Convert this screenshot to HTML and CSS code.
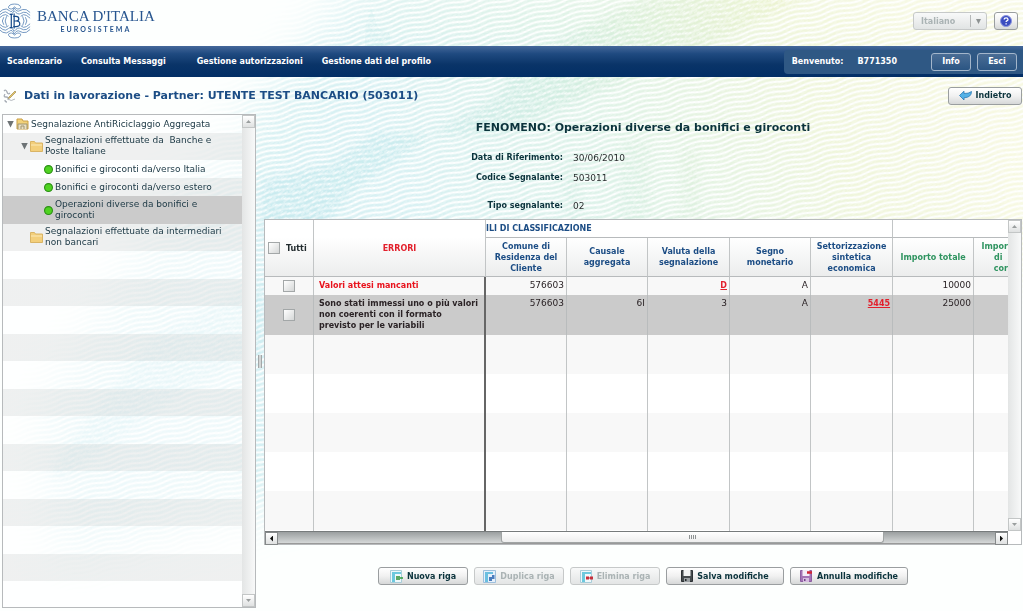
FILE: index.html
```html
<!DOCTYPE html>
<html lang="it">
<head>
<meta charset="utf-8">
<title>Banca d'Italia - Dati in lavorazione</title>
<link rel="stylesheet" href="styles.css">
</head>
<body>
<svg class="backdrop" viewBox="0 0 1023 611" preserveAspectRatio="xMidYMin slice" aria-hidden="true">
  <defs>
    <pattern id="waves" width="42" height="5" patternUnits="userSpaceOnUse" patternTransform="rotate(-14)">
      <path d="M0 2.5 Q10.500 0 21 2.5 T42 2.5" fill="none" stroke="#fff" stroke-width="2"/>
    </pattern>
    <pattern id="grain" width="11" height="9" patternUnits="userSpaceOnUse" patternTransform="rotate(-38)">
      <path d="M0 1h8M0 5.500h4M6 4h4M2 7.500h3" stroke="#fff" stroke-width="1.6" fill="none"/>
    </pattern>
    <linearGradient id="tint" gradientUnits="userSpaceOnUse" x1="60" y1="420" x2="960" y2="60">
      <stop offset="0" stop-color="#a9dfe9"/>
      <stop offset="0.42" stop-color="#b4e3e8"/>
      <stop offset="0.62" stop-color="#bfe6d2"/>
      <stop offset="0.85" stop-color="#e3edb9"/>
      <stop offset="1" stop-color="#f1f2c6"/>
    </linearGradient>
    <filter id="soft" x="-20%" y="-20%" width="140%" height="140%"><feGaussianBlur stdDeviation="24"/></filter>
    <filter id="edge" x="-20%" y="-20%" width="140%" height="140%"><feGaussianBlur stdDeviation="4"/></filter>
    <mask id="field" maskUnits="userSpaceOnUse" x="0" y="0" width="1023" height="611">
      <path filter="url(#soft)" d="M40 420 L150 230 L360 -20 L1060 -30 L1060 270 L640 330 L300 500 L60 560Z" fill="#fff" fill-opacity="0.5"/>
    </mask>
  </defs>
  <g mask="url(#field)">
    <rect width="1023" height="611" fill="url(#tint)"/>
    <rect width="1023" height="611" fill="url(#waves)"/>
  </g>
  <g opacity="0.34">
    <g filter="url(#edge)" fill="url(#tint)">
      <path d="M262 240 L262 180 L330 165 L375 133 L430 134 L408 152 L352 190 L330 219 L300 240Z"/>
      <path d="M520 60 L640 0 L740 -10 L820 -10 L700 50 L600 90 L500 135 L430 134 L500 95Z"/>
      <path d="M50 470 L150 340 L262 280 L262 350 L170 400 L60 480Z" opacity="0.8"/>
      <path d="M565 219 V160 H580 V219Z M620 219 V140 H650 V219Z M680 219 V150 H700 V219Z" opacity="0.5"/>
    </g>
    <path d="M365 46 V28 L371 8 L378 28 L390 34 V46Z" fill="url(#tint)" opacity="0.5"/>
    <rect width="1023" height="611" fill="url(#grain)" opacity="0.8"/>
  </g>
</svg>

<div class="app">
  <header class="masthead">
    <a class="brand" href="#">
      <svg class="emblem" viewBox="0 0 34 40" aria-hidden="true">
        <g fill="none" stroke="#5d87b8" stroke-width="0.9">
          <path d="M-1 14 L3 11 Q6 9 9 12 T15 9 Q19 14 22 12 T28 11 L32 14"/>
          <path d="M-1 17 L3 14 Q6 12 9 15 M22 15 Q25 12 28 14 L32 17"/>
          <path d="M-1 11 L3 8 Q7 6 10 9 T15 6 Q18 11 21 9 T28 8 L32 11"/>
          <path d="M-1 26 L3 29 Q6 31 9 28 T15 31 Q19 26 22 28 T28 29 L32 26"/>
          <path d="M-1 23 L3 26 Q6 28 9 25 M22 25 Q25 28 28 26 L32 23"/>
          <path d="M-1 29 L3 32 Q7 34 10 31 T15 34 Q18 29 21 31 T28 32 L32 29"/>
          <path d="M9 6 Q9 2 15.500 2 T22 6 Q19 9 15.500 5 Q12 9 9 6M9 34 Q9 38 15.500 38 T22 34 Q19 31 15.500 35 Q12 31 9 34"/>
          <path d="M7 15 Q4 20 7 25 M24 15 Q27 20 24 25 M4 16 Q1 20 4 24 M27 16 Q30 20 27 24"/>
        </g>
        <g fill="none" stroke="#164a8a" stroke-width="1.3">
          <path d="M12 13v14M10.500 13h3M10.500 27h3M15 12v16M14 15h3q3 0 3 2.500t-3 2.500h-2M17 20q4 0 4 3t-4 3h-3"/>
        </g>
      </svg>
      <span class="brand-text">
        <span class="brand-name">BANCA D'ITALIA</span>
        <span class="brand-sub">EUROSISTEMA</span>
      </span>
    </a>
    <div class="tools">
      <label class="language">
        <select aria-label="Lingua" disabled><option>Italiano</option></select>
        <svg class="caret" viewBox="0 0 14 12" aria-hidden="true"><path d="M0.5 0v12" stroke="#b5b8b8"/><path d="M6 4h5l-2.500 5z" fill="#8d9292"/></svg>
      </label>
      <button class="btn help" type="button" aria-label="Aiuto">
        <svg width="12" height="12" viewBox="0 0 12 12"><circle cx="6" cy="6" r="5.500" fill="#3a4cc0" stroke="#8a94dd"/><path d="M4.200 4.600q0-1.800 1.900-1.800t1.900 1.600q0 1-1.200 1.500q-.7.300-.7 1.200M6.100 8.300v1.200" fill="none" stroke="#fff" stroke-width="1.300"/></svg>
      </button>
    </div>
  </header>

  <nav class="navbar">
    <div class="menu">
      <a href="#">Scadenzario</a>
      <a href="#" class="wide">Consulta Messaggi</a>
      <a href="#">Gestione autorizzazioni</a>
      <a href="#">Gestione dati del profilo</a>
    </div>
    <div class="user">
      <span>Benvenuto:</span>
      <span class="user-id">B771350</span>
      <button class="nav-btn" type="button">Info</button>
      <button class="nav-btn" type="button">Esci</button>
    </div>
  </nav>

  <div class="title-bar">
    <svg width="16" height="16" viewBox="0 0 16 16" aria-hidden="true"><path d="M2 3q2-2 3 1t3 1M3 6q-2 3 1 3t2 3M5 14q-2 0-2-2" fill="none" stroke="#a7adb5" stroke-width="1.300"/><path d="M7 9L13 3l1 1-6 6-2 .6z" fill="#e5c765" stroke="#93804a" stroke-width=".6"/><path d="M6 11q3 3 7 0" fill="none" stroke="#b3b8bd"/></svg>
    <h1>Dati in lavorazione - Partner: UTENTE TEST BANCARIO (503011)</h1>
    <button class="btn back" type="button">
      <svg width="13" height="11" viewBox="0 0 13 11" aria-hidden="true"><path d="M.5 5.500L5 1.200v2.300q4.500.3 7.500-2Q12.500 7.500 5 7.800V10z" fill="#55b1e6" stroke="#2a78b5" stroke-width=".8"/></svg>
      Indietro
    </button>
  </div>

  <div class="workspace">
    <aside class="tree-panel">
      <ul class="tree">
        <li class="lvl0"><span class="twisty"></span>
          <svg class="folder" viewBox="0 0 13 12" aria-hidden="true"><path d="M1 3V1h5l1 2h5v8H1z" fill="#f2d27a" stroke="#c99f45"/><path d="M2 11V6h9v5M5 11V8h3v3" fill="#e8dfc6" stroke="#a0956f"/></svg>
          <a href="#">Segnalazione AntiRiciclaggio Aggregata</a></li>
        <li class="lvl1 alt"><span class="twisty"></span>
          <svg class="folder" viewBox="0 0 13 12" aria-hidden="true"><path d="M.5 3V1.500h4l1 1.500h7v8.500H.5z" fill="#f3cf7b" stroke="#d9b465"/><path d="M1 5h11" stroke="#fbe9b8"/></svg>
          <a href="#">Segnalazioni effettuate da&nbsp; Banche e<br>Poste Italiane</a></li>
        <li class="lvl2"><svg class="dot" viewBox="0 0 8 8" aria-hidden="true"><circle cx="4" cy="4" r="3.500" fill="#4fd321" stroke="#2c8f17"/></svg><a href="#">Bonifici e giroconti da/verso Italia</a></li>
        <li class="lvl2 alt"><svg class="dot" viewBox="0 0 8 8" aria-hidden="true"><circle cx="4" cy="4" r="3.500" fill="#4fd321" stroke="#2c8f17"/></svg><a href="#">Bonifici e giroconti da/verso estero</a></li>
        <li class="lvl2 selected"><svg class="dot" viewBox="0 0 8 8" aria-hidden="true"><circle cx="4" cy="4" r="3.500" fill="#4fd321" stroke="#2c8f17"/></svg><a href="#">Operazioni diverse da bonifici e<br>giroconti</a></li>
        <li class="lvl1 alt leaf">
          <svg class="folder" viewBox="0 0 13 12" aria-hidden="true"><path d="M.5 3V1.500h4l1 1.500h7v8.500H.5z" fill="#f3cf7b" stroke="#d9b465"/><path d="M1 5h11" stroke="#fbe9b8"/></svg>
          <a href="#">Segnalazioni effettuate da intermediari<br>non bancari</a></li>
        <li class="filler"></li>
      </ul>
      <div class="vbar"><span class="step up"></span><span class="step down"></span></div>
    </aside>

    <div class="splitter"><span></span></div>

    <main class="content">
      <h2>FENOMENO: Operazioni diverse da bonifici e giroconti</h2>
      <dl class="facts">
        <dt>Data di Riferimento:</dt><dd>30/06/2010</dd>
        <dt>Codice Segnalante:</dt><dd>503011</dd>
        <dt class="late">Tipo segnalante:</dt><dd class="late">02</dd>
      </dl>

      <div class="grid">
        <div class="viewport">
          <table>
            <colgroup><col class="c-check"><col class="c-error"><col class="c-val"><col class="c-val"><col class="c-wide"><col class="c-val"><col class="c-wide"><col class="c-val"><col></colgroup>
            <thead>
              <tr class="group">
                <th rowspan="2" class="tall"><label class="all"><input type="checkbox">Tutti</label></th>
                <th rowspan="2" class="tall errors">ERRORI</th>
                <th colspan="5" class="group-name">ILI DI CLASSIFICAZIONE</th>
                <th colspan="2"></th>
              </tr>
              <tr class="names">
                <th>Comune di<br>Residenza del<br>Cliente</th>
                <th>Causale<br>aggregata</th>
                <th>Valuta della<br>segnalazione</th>
                <th>Segno<br>monetario</th>
                <th>Settorizzazione<br>sintetica<br>economica</th>
                <th class="green">Importo totale</th>
                <th class="green partial">Impor<br>di&nbsp;&nbsp;<br>cor</th>
              </tr>
            </thead>
            <tbody>
              <tr class="alt"><td class="check"><input type="checkbox" aria-label="Seleziona riga 1"></td><td class="msg bad">Valori attesi mancanti</td><td>576603</td><td></td><td><a href="#">D</a></td><td>A</td><td></td><td>10000</td><td></td></tr>
              <tr class="current"><td class="check"><input type="checkbox" aria-label="Seleziona riga 2"></td><td class="msg">Sono stati immessi uno o più valori<br>non coerenti con il formato<br>previsto per le variabili</td><td>576603</td><td>6I</td><td>3</td><td>A</td><td><a href="#">5445</a></td><td>25000</td><td></td></tr>
              <tr class="empty alt"><td></td><td></td><td></td><td></td><td></td><td></td><td></td><td></td><td></td></tr>
              <tr class="empty"><td></td><td></td><td></td><td></td><td></td><td></td><td></td><td></td><td></td></tr>
              <tr class="empty alt"><td></td><td></td><td></td><td></td><td></td><td></td><td></td><td></td><td></td></tr>
              <tr class="empty"><td></td><td></td><td></td><td></td><td></td><td></td><td></td><td></td><td></td></tr>
              <tr class="empty alt"><td></td><td></td><td></td><td></td><td></td><td></td><td></td><td></td><td></td></tr>
              <tr class="empty"><td></td><td></td><td></td><td></td><td></td><td></td><td></td><td></td><td></td></tr>
            </tbody>
          </table>
        </div>
        <div class="vbar"><span class="step up"></span><span class="step down"></span></div>
        <div class="hbar">
          <span class="step left"></span>
          <span class="track"><span class="thumb"><i></i><i></i><i></i><i></i></span></span>
          <span class="step right"></span>
        </div>
        <div class="corner"></div>
      </div>

      <div class="actions">
        <button class="btn row-btn" type="button">
          <svg width="13" height="13" viewBox="0 0 13 13" aria-hidden="true"><path d="M.5.500h11v12H.5z" fill="#eef8fb" stroke="#a8cdd9"/><path d="M2 2h9v2H5v8H2z" fill="#6cc9de"/><path d="M6 6h4v4H6z" fill="#5aa765"/><path d="M10 8h3" stroke="#2d9a3a" stroke-width="1.500"/></svg>
          Nuova riga</button>
        <button class="btn row-btn" type="button" disabled>
          <svg width="13" height="13" viewBox="0 0 13 13" aria-hidden="true"><path d="M.5.500h12v12H.5z" fill="#e6f0fa" stroke="#9dbfdc"/><path d="M2 2h8v2H5v8H2z" fill="#6bbfe0"/><path d="M6 7h3v4H6zM9 5h2.500v4H9z" fill="#4a7cbd"/></svg>
          Duplica riga</button>
        <button class="btn row-btn" type="button" disabled>
          <svg width="13" height="13" viewBox="0 0 13 13" aria-hidden="true"><path d="M.5.500h11v12H.5z" fill="#eef8fb" stroke="#a8cdd9"/><path d="M2 2h9v2H5v8H2z" fill="#6cc9de"/><path d="M6 6.500h3v3H6zM10 6.500h3v3h-3z" fill="#c4303c"/><path d="M9 8h1" stroke="#c4303c"/></svg>
          Elimina riga</button>
        <button class="btn save-btn" type="button">
          <svg width="12" height="12" viewBox="0 0 12 12" aria-hidden="true"><path d="M.5.500h11v11H.5z" fill="#444a4d" stroke="#2c3134"/><path d="M2.500 0h7v6h-7z" fill="#f1f3f3"/><path d="M3 8h6v4H3z" fill="#9ba1a4"/><path d="M4 9h1.500v2H4z" fill="#25292b"/></svg>
          Salva modifiche</button>
        <button class="btn save-btn" type="button">
          <svg width="13" height="12" viewBox="0 0 13 12" aria-hidden="true"><path d="M.5.500h11v11H.5z" fill="#a473b6" stroke="#8d5ea2"/><path d="M2.500 0h7v6h-7z" fill="#f4ecf7"/><path d="M3 8h6v4H3z" fill="#d6bce0"/><path d="M4 9h1.500v2H4z" fill="#6d3f82"/><path d="M7 2.500h5" stroke="#cf2436" stroke-width="2.500"/></svg>
          Annulla modifiche</button>
      </div>
    </main>
  </div>
</div>
</body>
</html>
```

FILE: styles.css
```css
:root {
  --ink: #0b333c;
  --blue: #1c4d85;
  --line: #b7babc;
  --sans: "DejaVu Sans", Verdana, sans-serif;
}
* { box-sizing: border-box; }
html, body { height: 100%; margin: 0; }
body { background: #fdfffe; font: 8px/11px var(--sans); color: #2b2f30; position: relative; overflow: hidden; }
a { color: inherit; text-decoration: none; }
button, select, input { font: inherit; margin: 0; }
h1, h2, dl, dd, ul { margin: 0; padding: 0; }

.backdrop { position: absolute; inset: 0; width: 100%; height: 100%; }
.app { position: relative; display: flex; flex-direction: column; height: 100%; }

.masthead { display: flex; justify-content: space-between; height: 46px; padding-right: 5px; }
.brand { display: flex; color: #27558f; gap: 5px; }
.emblem { width: 32px; height: 40px; margin-top: 1px; }
.brand-text { display: flex; flex-direction: column; align-items: center; padding-top: 8px; font-family: "Liberation Serif", serif; }
.brand-name { font-size: 15px; line-height: 17px; }
.brand-sub { font: bold 7px/9px Lato, sans-serif; letter-spacing: 2px; }
.tools { display: flex; align-items: center; gap: 7px; padding-bottom: 4px; }

.btn {
  display: inline-flex; align-items: center; justify-content: center; gap: 4px;
  height: 18px; padding: 0 4px; border: 1px solid #9a9ea0; border-radius: 3px;
  background: linear-gradient(#fff, #f1f1f1 50%, #d6d8d8);
  color: var(--ink); font-weight: bold;
}
.btn:disabled { border-color: #c6c9c9; background: linear-gradient(#f8f9f9, #e3e5e5); color: #aab3b4; }
.help { width: 24px; }
.language { position: relative; display: flex; }
.language select {
  appearance: none; width: 74px; height: 18px; padding: 0 0 0 7px; border: 1px solid #c6c9c9; border-radius: 3px;
  background: linear-gradient(#f8f9f9, #e1e4e4); color: #aab3b4; font-weight: bold; opacity: 1;
}
.caret { position: absolute; right: 3px; top: 3px; width: 14px; height: 12px; }

.navbar {
  display: flex; justify-content: space-between; align-items: center; height: 31px; padding-left: 7px;
  background: linear-gradient(#45689a, #1f4a80 25%, #0a3468 60%, #022e66);
  color: #fff; font-weight: bold;
}
.menu { display: flex; gap: 19px; }
.menu .wide { padding-right: 12px; }
.user { display: flex; align-items: center; gap: 6px; height: 24px; padding: 0 6px 0 8px; background: #2f5884; border-radius: 4px 0 0 4px; }
.user-id { margin: 0 28px 0 8px; }
.nav-btn {
  height: 18px; min-width: 40px; padding: 0 10px; border: 1px solid #a3b6cb; border-radius: 3px;
  background: linear-gradient(#4a6d95, #2b5583); color: #fff; font-weight: bold;
}

.title-bar { display: flex; align-items: center; height: 37px; padding: 0 1px 0 2px; gap: 6px; }
.title-bar h1 { flex: 1; font-size: 11px; line-height: 14px; color: var(--blue); }
.back { width: 74px; }

.workspace { display: flex; flex: 1; min-height: 0; padding: 0 1px 3px 2px; }
.tree-panel { display: flex; width: 254px; flex: none; border: 1px solid var(--line); }
.tree { display: flex; flex-direction: column; flex: 1; list-style: none; font-size: 9px; color: #203c48; }
.tree li { display: flex; align-items: center; min-height: 18px; gap: 1px; background: rgba(255, 255, 255, .6); }
.tree a { white-space: nowrap; }
.tree li.alt { background: rgba(232, 234, 234, .7); }
.tree li.selected { background: #cbcbcb; }
.tree .lvl0 { padding-left: 4px; gap: 2px; }
.tree .lvl1 { padding: 2px 0 3px 18px; gap: 2px; }
.tree .leaf { padding-left: 27px; }
.tree .lvl2 { padding-left: 41px; gap: 2px; }
.tree .selected { padding-top: 3px; padding-bottom: 3px; }
.tree .filler { flex: 1; background: repeating-linear-gradient(rgba(255, 255, 255, .6) 0 28px, rgba(232, 234, 234, .7) 28px 55px); }
.twisty { width: 7px; height: 7px; flex: none; background: #6d7375; clip-path: polygon(0 0, 100% 0, 50% 100%); }
.folder { width: 13px; height: 12px; flex: none; }
.dot { width: 9px; height: 9px; flex: none; }

.vbar { display: flex; flex-direction: column; justify-content: space-between; width: 13px; flex: none; background: linear-gradient(90deg, #e3e5e5, #f8f9f9); }
.step { display: flex; align-items: center; justify-content: center; width: 13px; height: 13px; flex: none; border: 1px solid #c3c6c6; background: linear-gradient(#fff, #dfe1e1); }
.step::after { content: ""; width: 5px; height: 3px; background: #9a9e9e; }
.up::after { clip-path: polygon(50% 0, 100% 100%, 0 100%); }
.down::after { clip-path: polygon(0 0, 100% 0, 50% 100%); }
.left::after, .right::after { width: 3px; height: 6px; background: #111; }
.left::after { clip-path: polygon(100% 0, 100% 100%, 0 50%); }
.right::after { clip-path: polygon(0 0, 100% 50%, 0 100%); }
.hbar .step { border-color: #85898a; }

.splitter { display: flex; align-items: center; justify-content: center; width: 8px; flex: none; }
.splitter span { width: 4px; height: 13px; border: solid #a3a7a8; border-width: 0 1px; background: #d3d6d6; }

.content { display: flex; flex-direction: column; flex: 1; min-width: 0; }
.content h2 { padding: 7px 0 17px; text-align: center; font-size: 11px; line-height: 14px; color: var(--ink); }
.facts { display: grid; grid-template-columns: 299px 1fr; column-gap: 10px; row-gap: 8px; padding-bottom: 7px; line-height: 12px; }
.facts dt { text-align: right; font-weight: bold; color: var(--ink); }
.facts dd { font-size: 9px; }
.facts .late { padding-top: 8px; }

.grid { display: grid; grid-template-columns: minmax(0, 1fr) 13px; grid-template-rows: minmax(0, 1fr) 13px; flex: 1; min-height: 0; border: 1px solid var(--line); background: #fff; }
.viewport { overflow: hidden; }
table { width: 100%; table-layout: fixed; border-collapse: separate; border-spacing: 0; }
.c-check { width: 49px; }
.c-error { width: 172px; }
.c-val { width: 81px; }
.c-wide { width: 82px; }
th, td { padding: 0; border-right: 1px solid #c2c5c6; }
th:last-child, td:last-child { border-right: 0; }
th { color: var(--blue); border-bottom: 1px solid var(--line); white-space: nowrap; }
.group th { height: 18px; }
.group .group-name { text-align: left; }
.names th { height: 39px; background: linear-gradient(#fff, #eceded); }
.group .tall { background: linear-gradient(#fff 30%, #eceded); }
.group .errors { color: #e2202c; }
.names .green { color: #2f9460; }
.names .partial { text-align: right; }
.all { display: flex; align-items: center; gap: 6px; padding-left: 3px; color: #222b2e; }
td { height: 18px; padding: 3px 2px 4px; text-align: right; vertical-align: top; font-size: 9px; color: #2b2326; }
td:nth-child(2) { border-right: 2px solid #666; }
.alt td { background: #f8f8f8; }
.current td { background: #cbcbcb; border-right-color: #b9bcbd; }
.current td:nth-child(2) { border-right-color: #666; }
.empty td { height: 39px; padding: 0; }
.check { padding: 0; vertical-align: middle; }
td.msg { padding-left: 5px; text-align: left; font-size: 8px; font-weight: bold; white-space: nowrap; }
td.bad { color: #e8121c; }
td a { color: #e2202c; font-weight: bold; font-size: 8px; text-decoration: underline; }
input[type="checkbox"] { appearance: none; display: block; width: 12px; height: 12px; border: 1px solid #a3a7a8; background: linear-gradient(135deg, #fff, #d5d7d7); }
.check input { margin: 0 auto; }

.hbar { display: flex; border-top: 1px solid #777b7c; }
.track { display: flex; flex: 1; padding: 0 15% 0 30%; background: linear-gradient(#9b9fa0, #d5d8d8); border-bottom: 1px solid #999; }
.thumb { display: flex; align-items: center; justify-content: center; gap: 1px; flex: 1; background: linear-gradient(#fff, #eee); border: solid #a0a4a4; border-width: 0 1px 1px; border-radius: 0 0 3px 3px; }
.thumb i { width: 1px; height: 4px; background: #8e9293; }
.corner { background: #fff; }

.actions { display: flex; justify-content: center; gap: 6px; padding: 22px 0 23px; }
.row-btn { width: 90px; }
.save-btn { width: 118px; }
```
